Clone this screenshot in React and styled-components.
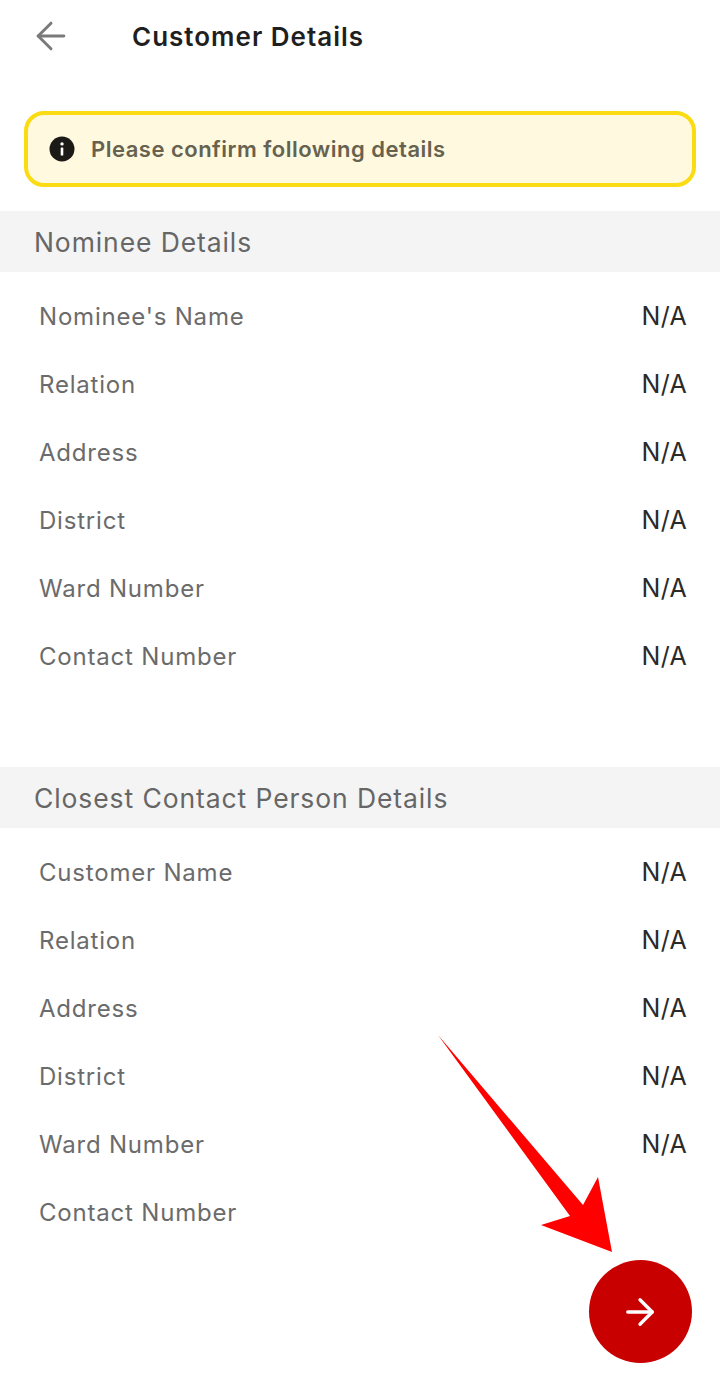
import React from 'react'
import styled, { createGlobalStyle } from 'styled-components'
import { ArrowLeft, ArrowRight } from 'lucide-react'

const nomineeRows = [
  { label: "Nominee's Name", value: 'N/A' },
  { label: 'Relation', value: 'N/A' },
  { label: 'Address', value: 'N/A' },
  { label: 'District', value: 'N/A' },
  { label: 'Ward Number', value: 'N/A' },
  { label: 'Contact Number', value: 'N/A' },
]

const contactRows = [
  { label: 'Customer Name', value: 'N/A' },
  { label: 'Relation', value: 'N/A' },
  { label: 'Address', value: 'N/A' },
  { label: 'District', value: 'N/A' },
  { label: 'Ward Number', value: 'N/A' },
  { label: 'Contact Number', value: '' },
]

const Section = ({ title, rows }) => (
  <SectionWrapper>
    <SectionTitle>{title}</SectionTitle>
    <RowList>
      {rows.map((row, index) => (
        <Row key={index}>
          <RowLabel>{row.label}</RowLabel>
          <RowValue>{row.value}</RowValue>
        </Row>
      ))}
    </RowList>
  </SectionWrapper>
)

const App = () => {
  return (
    <>
      <GlobalStyle />
      <Page>
        <Header>
          <BackButton>
            <ArrowLeft size={44} strokeWidth={1.6} />
          </BackButton>
          <Title>Customer Details</Title>
        </Header>
        <Notice>
          <svg width="26" height="26" viewBox="0 0 26 26">
            <circle cx="13" cy="13" r="12.5" fill="#1c1a16" />
            <rect x="11.7" y="11.5" width="2.6" height="8" rx="0.6" fill="#fff" />
            <circle cx="13" cy="7.9" r="1.7" fill="#fff" />
          </svg>
          <NoticeText>Please confirm following details</NoticeText>
        </Notice>
        <Section title="Nominee Details" rows={nomineeRows} />
        <Section title="Closest Contact Person Details" rows={contactRows} />
        <Annotation width="720" height="1400" viewBox="0 0 720 1400">
          <path d="M438 1035 L583 1205 L598 1177 L612 1252 L541 1225 L570 1216 Z" fill="#fe0000" />
        </Annotation>
        <NextButton>
          <ArrowRight size={42} strokeWidth={1.9} />
        </NextButton>
      </Page>
    </>
  )
}

const GlobalStyle = createGlobalStyle`
  body {
    margin: 0;
    background: #fff;
    font-family: "Inter", "Noto Sans", sans-serif;
  }
`

const Page = styled.div`
  position: relative;
  width: 720px;
  height: 1400px;
  overflow: hidden;
  background: #fff;
`

const Header = styled.div`
  display: flex;
  align-items: center;
  height: 72px;
  padding-left: 29px;
  margin-bottom: 39px;
`

const BackButton = styled.div`
  display: flex;
  width: 103px;
  color: #7a7a7a;
`

const Title = styled.div`
  font-size: 26px;
  font-weight: 600;
  color: #1f1f1f;
  letter-spacing: 1px;
`

const Notice = styled.div`
  display: flex;
  align-items: center;
  gap: 16px;
  box-sizing: border-box;
  height: 76px;
  margin: 0 24px 24px;
  padding-left: 21px;
  background: #fff9e0;
  border: 4px solid #fbdc14;
  border-radius: 20px;
`

const NoticeText = styled.div`
  font-size: 22px;
  font-weight: 600;
  color: #66624f;
  letter-spacing: 0.5px;
`

const SectionWrapper = styled.div`
  margin-bottom: 77px;
`

const SectionTitle = styled.div`
  display: flex;
  align-items: center;
  height: 61px;
  padding-left: 34px;
  background: #f4f4f4;
  font-size: 26.5px;
  color: #666;
  letter-spacing: 0.9px;
`

const RowList = styled.div`
  padding: 10px 33px 0 39px;
`

const Row = styled.div`
  display: flex;
  align-items: center;
  justify-content: space-between;
  height: 68px;
`

const RowLabel = styled.div`
  font-size: 24px;
  color: #6b6b6b;
  letter-spacing: 0.8px;
`

const RowValue = styled.div`
  font-size: 25px;
  color: #2a2a2a;
  letter-spacing: 0.3px;
`

const Annotation = styled.svg`
  position: absolute;
  top: 0;
  left: 0;
  pointer-events: none;
`

const NextButton = styled.div`
  position: absolute;
  left: 589px;
  top: 1260px;
  display: flex;
  align-items: center;
  justify-content: center;
  box-sizing: border-box;
  width: 103px;
  height: 103px;
  padding-right: 2px;
  border-radius: 50%;
  background: #c80000;
  color: #fff;
`

export default App
